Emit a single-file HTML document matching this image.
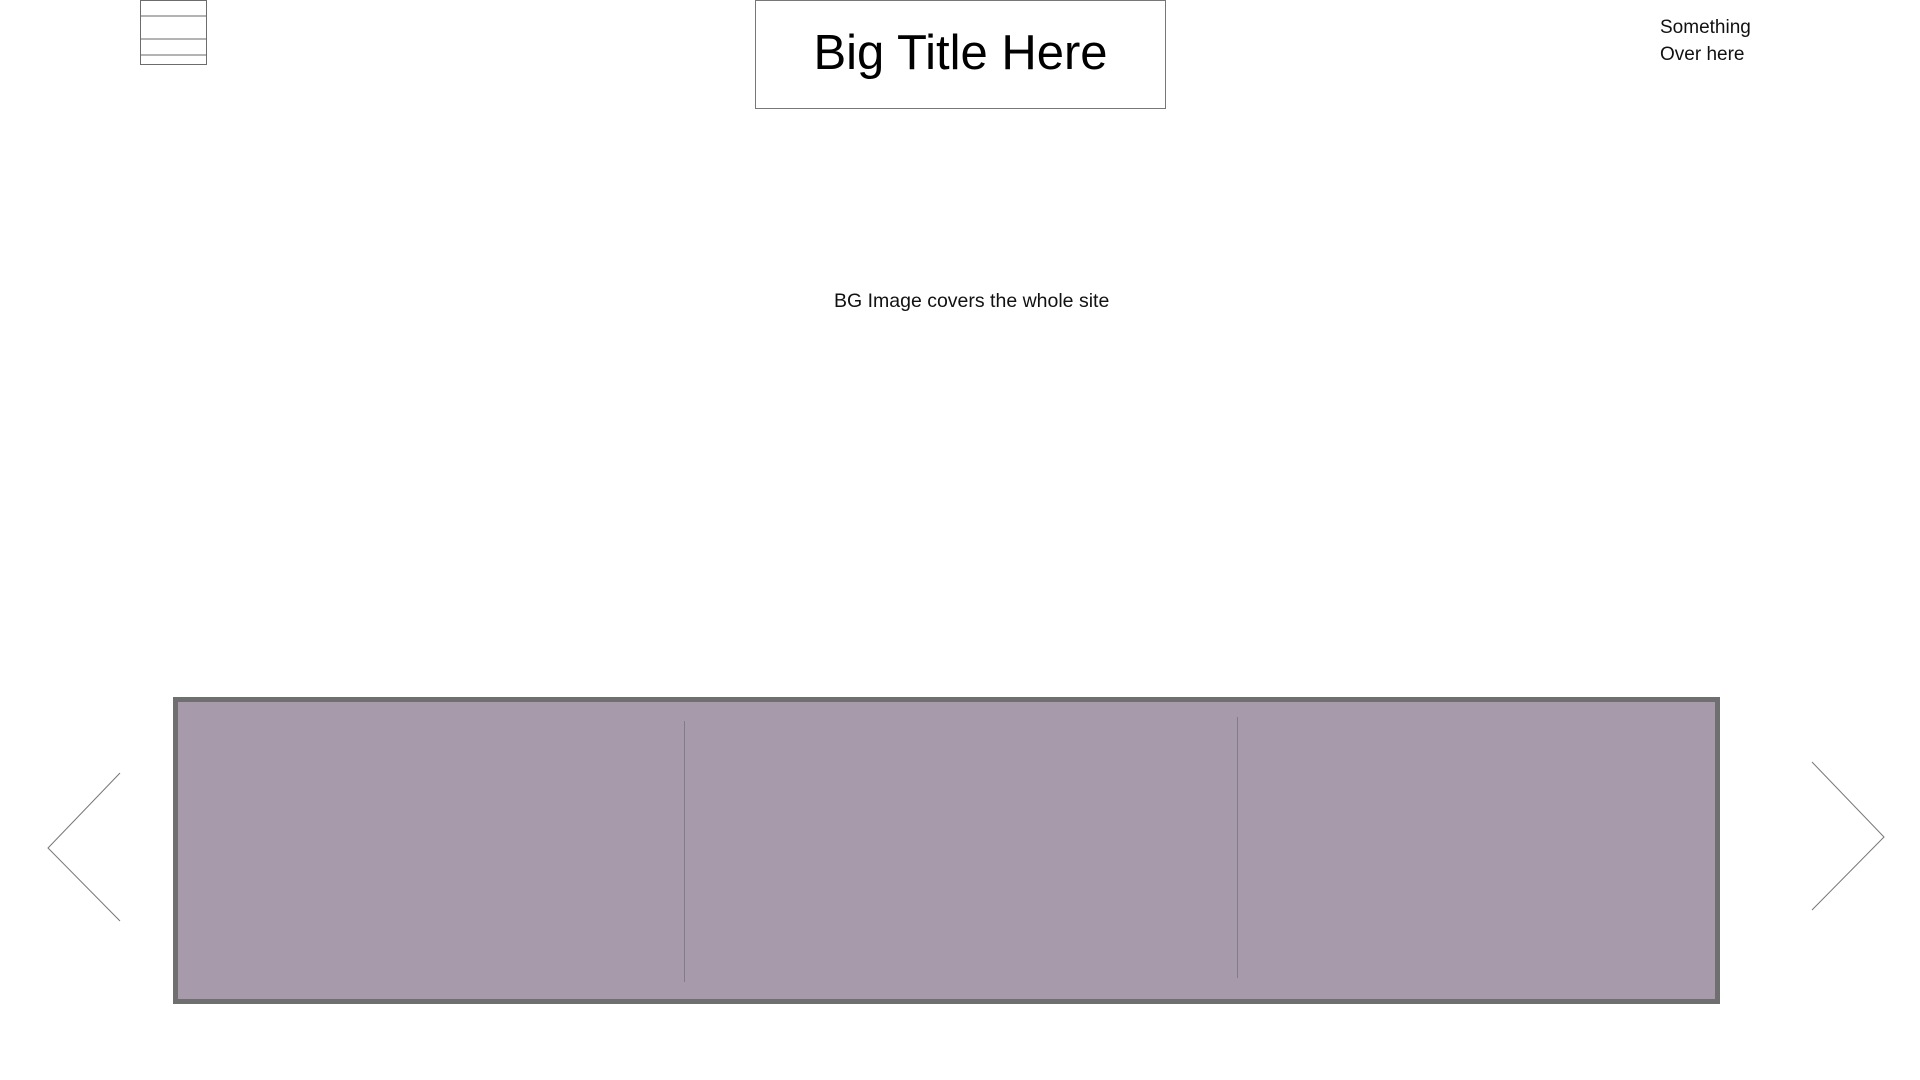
<!DOCTYPE html>
<html><head><meta charset="utf-8"><style>
html,body{margin:0;padding:0;width:1920px;height:1080px;background:#fff;overflow:hidden;position:relative;font-family:"Liberation Sans",sans-serif;color:#111}
.a{position:absolute}
</style></head><body>
<div class="a" style="left:140px;top:0px;width:65px;height:63px;border:1px solid #6c6c6c;"></div>
<div class="a" style="left:141px;top:15px;width:65px;height:2px;background:#b3b3b3"></div>
<div class="a" style="left:141px;top:38px;width:65px;height:2px;background:#b3b3b3"></div>
<div class="a" style="left:141px;top:54px;width:65px;height:2px;background:#b3b3b3"></div>

<div class="a" style="left:755px;top:0px;width:409px;height:107px;border:1px solid #777;"></div>
<div class="a" style="left:755px;top:22px;width:411px;text-align:center;font-size:49px;line-height:62px;color:#000">Big Title Here</div>

<div class="a" style="left:1660px;top:14px;font-size:19px;line-height:27px;color:#111">Something<br>Over here</div>

<div class="a" style="left:834px;top:290px;font-size:19.5px;line-height:22px;white-space:nowrap">BG Image covers the whole site</div>

<div class="a" style="left:173px;top:697px;width:1537px;height:297px;background:#a79bab;border:5px solid #6f6f6f"></div>
<div class="a" style="left:684px;top:721px;width:1px;height:261px;background:#817c86"></div>
<div class="a" style="left:1237px;top:717px;width:1px;height:261px;background:#817c86"></div>

<svg class="a" style="left:0;top:0" width="1920" height="1080">
<polyline points="120,773 48,848 120,921" fill="none" stroke="#777" stroke-width="1"/>
<polyline points="1812,762 1884,837 1812,910" fill="none" stroke="#777" stroke-width="1"/>
</svg>
</body></html>
